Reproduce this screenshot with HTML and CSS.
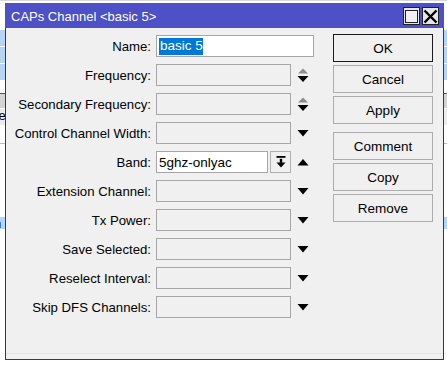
FILE: index.html
```html
<!DOCTYPE html>
<html>
<head>
<meta charset="utf-8">
<link rel="stylesheet" href="styles.css">
</head>
<body>
<div class="desk">
  <div class="bg-top"></div>
  <div class="bg-row blue"></div>
  <div class="bg-row blue"></div>
  <div class="bg-row blue"></div>
  <div class="bg-row white"></div>
  <div class="bg-row gray"></div>
  <div class="bg-row lgray"><span class="bg-text">ce</span></div>
  <div class="bg-row white tall"></div>
  <div class="bg-row white tall2"></div>
  <div class="bg-row blue2"><span class="bg-text">n</span></div>
</div>

<div class="window">
  <div class="titlebar">
    <span class="title">CAPs Channel &lt;basic 5&gt;</span>
    <div class="tb-buttons">
      <span class="tb-btn"><span class="max-box"></span></span>
      <span class="tb-btn">
        <svg width="15" height="15" viewBox="0 0 15 15"><path d="M1.5 1.5 L13.5 13.5 M13.5 1.5 L1.5 13.5" stroke="#000" stroke-width="2.4" fill="none"/></svg>
      </span>
    </div>
  </div>
  <div class="wbody">
    <div class="form">
      <div class="row">
        <label class="lbl">Name:</label>
        <div class="field white wide"><span class="sel">basic 5</span></div>
      </div>
      <div class="row">
        <label class="lbl">Frequency:</label>
        <div class="field"></div>
        <span class="arrow">
          <svg width="12" height="15" viewBox="0 0 12 15"><polygon points="1,5.5 11,5.5 6,0.5" fill="#8c8c8c"/><polygon points="0.5,8 11.5,8 6,14" fill="#000"/></svg>
        </span>
      </div>
      <div class="row">
        <label class="lbl">Secondary Frequency:</label>
        <div class="field"></div>
        <span class="arrow">
          <svg width="12" height="15" viewBox="0 0 12 15"><polygon points="1,5.5 11,5.5 6,0.5" fill="#8c8c8c"/><polygon points="0.5,8 11.5,8 6,14" fill="#000"/></svg>
        </span>
      </div>
      <div class="row">
        <label class="lbl">Control Channel Width:</label>
        <div class="field"></div>
        <span class="arrow"><svg width="12" height="7" viewBox="0 0 12 7"><polygon points="0.5,0 11.5,0 6,6.5" fill="#000"/></svg></span>
      </div>
      <div class="row">
        <label class="lbl">Band:</label>
        <div class="field white band">5ghz-onlyac</div>
        <span class="dd-btn">
          <svg width="10" height="12" viewBox="0 0 10 12"><rect x="0.5" y="0" width="9" height="1.8" fill="#000"/><rect x="3.8" y="2.8" width="2.4" height="4" fill="#000"/><polygon points="0.5,6.5 9.5,6.5 5,11.5" fill="#000"/></svg>
        </span>
        <span class="arrow"><svg width="12" height="7" viewBox="0 0 12 7"><polygon points="0.5,6.5 11.5,6.5 6,0" fill="#000"/></svg></span>
      </div>
      <div class="row">
        <label class="lbl">Extension Channel:</label>
        <div class="field"></div>
        <span class="arrow"><svg width="12" height="7" viewBox="0 0 12 7"><polygon points="0.5,0 11.5,0 6,6.5" fill="#000"/></svg></span>
      </div>
      <div class="row">
        <label class="lbl">Tx Power:</label>
        <div class="field"></div>
        <span class="arrow"><svg width="12" height="7" viewBox="0 0 12 7"><polygon points="0.5,0 11.5,0 6,6.5" fill="#000"/></svg></span>
      </div>
      <div class="row">
        <label class="lbl">Save Selected:</label>
        <div class="field"></div>
        <span class="arrow"><svg width="12" height="7" viewBox="0 0 12 7"><polygon points="0.5,0 11.5,0 6,6.5" fill="#000"/></svg></span>
      </div>
      <div class="row">
        <label class="lbl">Reselect Interval:</label>
        <div class="field"></div>
        <span class="arrow"><svg width="12" height="7" viewBox="0 0 12 7"><polygon points="0.5,0 11.5,0 6,6.5" fill="#000"/></svg></span>
      </div>
      <div class="row">
        <label class="lbl">Skip DFS Channels:</label>
        <div class="field"></div>
        <span class="arrow"><svg width="12" height="7" viewBox="0 0 12 7"><polygon points="0.5,0 11.5,0 6,6.5" fill="#000"/></svg></span>
      </div>
    </div>
    <div class="buttons">
      <div class="btn default">OK</div>
      <div class="btn">Cancel</div>
      <div class="btn">Apply</div>
      <div class="btn sep">Comment</div>
      <div class="btn">Copy</div>
      <div class="btn">Remove</div>
    </div>
  </div>
</div>
</body>
</html>
```

FILE: styles.css
```css
* { box-sizing: border-box; }
html, body {
  margin: 0;
  padding: 0;
  width: 447px;
  height: 365px;
  overflow: hidden;
  background: #ffffff;
  font-family: "Liberation Sans", Arial, sans-serif;
}

.desk {
  display: flex;
  flex-direction: column;
  width: 447px;
  height: 365px;
}
.bg-top { height: 30px; background: #ffffff; border-top: 1px solid #d8d8d8; }
.bg-row { height: 17px; border-bottom: 1px solid #ffffff; position: relative; }
.bg-row.blue { background: #b8d4f4; }
.bg-row.white { background: #ffffff; height: 13px; border-bottom: 1px solid #555; }
.bg-row.gray { background: #d4d4d4; height: 15px; }
.bg-row.lgray { background: #ececec; height: 17px; }
.bg-row.tall { height: 18px; border-bottom: 1px solid #bdbdbd; }
.bg-row.tall2 { height: 73px; border-bottom: none; }
.bg-row.blue2 { background: #b8d4f4; height: 13px; }
.bg-text { font-size: 13px; position: absolute; left: -8px; top: 0; line-height: 14px; color: #000; }
.bg-row.blue2 .bg-text { left: -6px; }

.window {
  position: absolute;
  left: 5px;
  top: 3px;
  width: 439px;
  height: 357px;
  background: #f0f0f0;
  border: 1px solid #3a3a3a;
  border-top: none;
  display: flex;
  flex-direction: column;
}

.titlebar {
  height: 25px;
  margin: 0 -1px;
  background: #4d50c6;
  display: flex;
  align-items: center;
  justify-content: space-between;
  padding: 0 5px 0 6px;
}
.title {
  color: #ffffff;
  font-size: 13px;
  padding-top: 1px;
}
.tb-buttons { display: flex; gap: 2px; padding-top: 1px; }
.tb-btn {
  width: 17px;
  height: 18px;
  background: #e6e6e6;
  border: 1px solid #222;
  display: flex;
  align-items: center;
  justify-content: center;
}
.max-box {
  width: 13px;
  height: 13px;
  border: 1px solid #222;
  background: #f0f0f0;
}

.wbody {
  flex: 1;
  display: flex;
  padding: 6px 0 0 0;
  border-bottom: 1px solid #e4e4e4;
  margin-bottom: 5px;
}

.form {
  display: flex;
  flex-direction: column;
  gap: 7px;
  padding-top: 1px;
  width: 308px;
}
.row {
  display: flex;
  align-items: center;
  height: 22px;
}
.lbl {
  width: 145px;
  text-align: right;
  font-size: 13.2px;
  color: #000;
  margin-right: 5px;
  white-space: nowrap;
}
.field {
  width: 135px;
  height: 22px;
  border: 1px solid #a6a6a6;
  background: #f0f0f0;
  font-size: 13.5px;
  display: flex;
  align-items: center;
  padding-left: 2px;
  color: #000;
}
.field.white { background: #ffffff; }
.field.wide { width: 158px; }
.field.band { width: 112px; }
.sel {
  background: #0078d7;
  color: #ffffff;
  padding: 2px 0 3px 1px;
  line-height: 12px;
}
.dd-btn {
  width: 21px;
  height: 22px;
  margin-left: 2px;
  border: 1px solid #b0b0b0;
  background: #f0f0f0;
  display: flex;
  align-items: center;
  justify-content: center;
}
.arrow {
  width: 23px;
  display: flex;
  justify-content: center;
  align-items: center;
  padding-left: 1px;
}

.buttons {
  margin-left: 19px;
  display: flex;
  flex-direction: column;
  gap: 3px;
}
.btn {
  width: 100px;
  height: 28px;
  border: 1px solid #adadad;
  background: #f0f0f0;
  font-size: 13.5px;
  color: #000;
  display: flex;
  align-items: center;
  justify-content: center;
}
.btn.default { border: 1px solid #1a1a1a; }
.btn.sep { margin-top: 5px; }
```
